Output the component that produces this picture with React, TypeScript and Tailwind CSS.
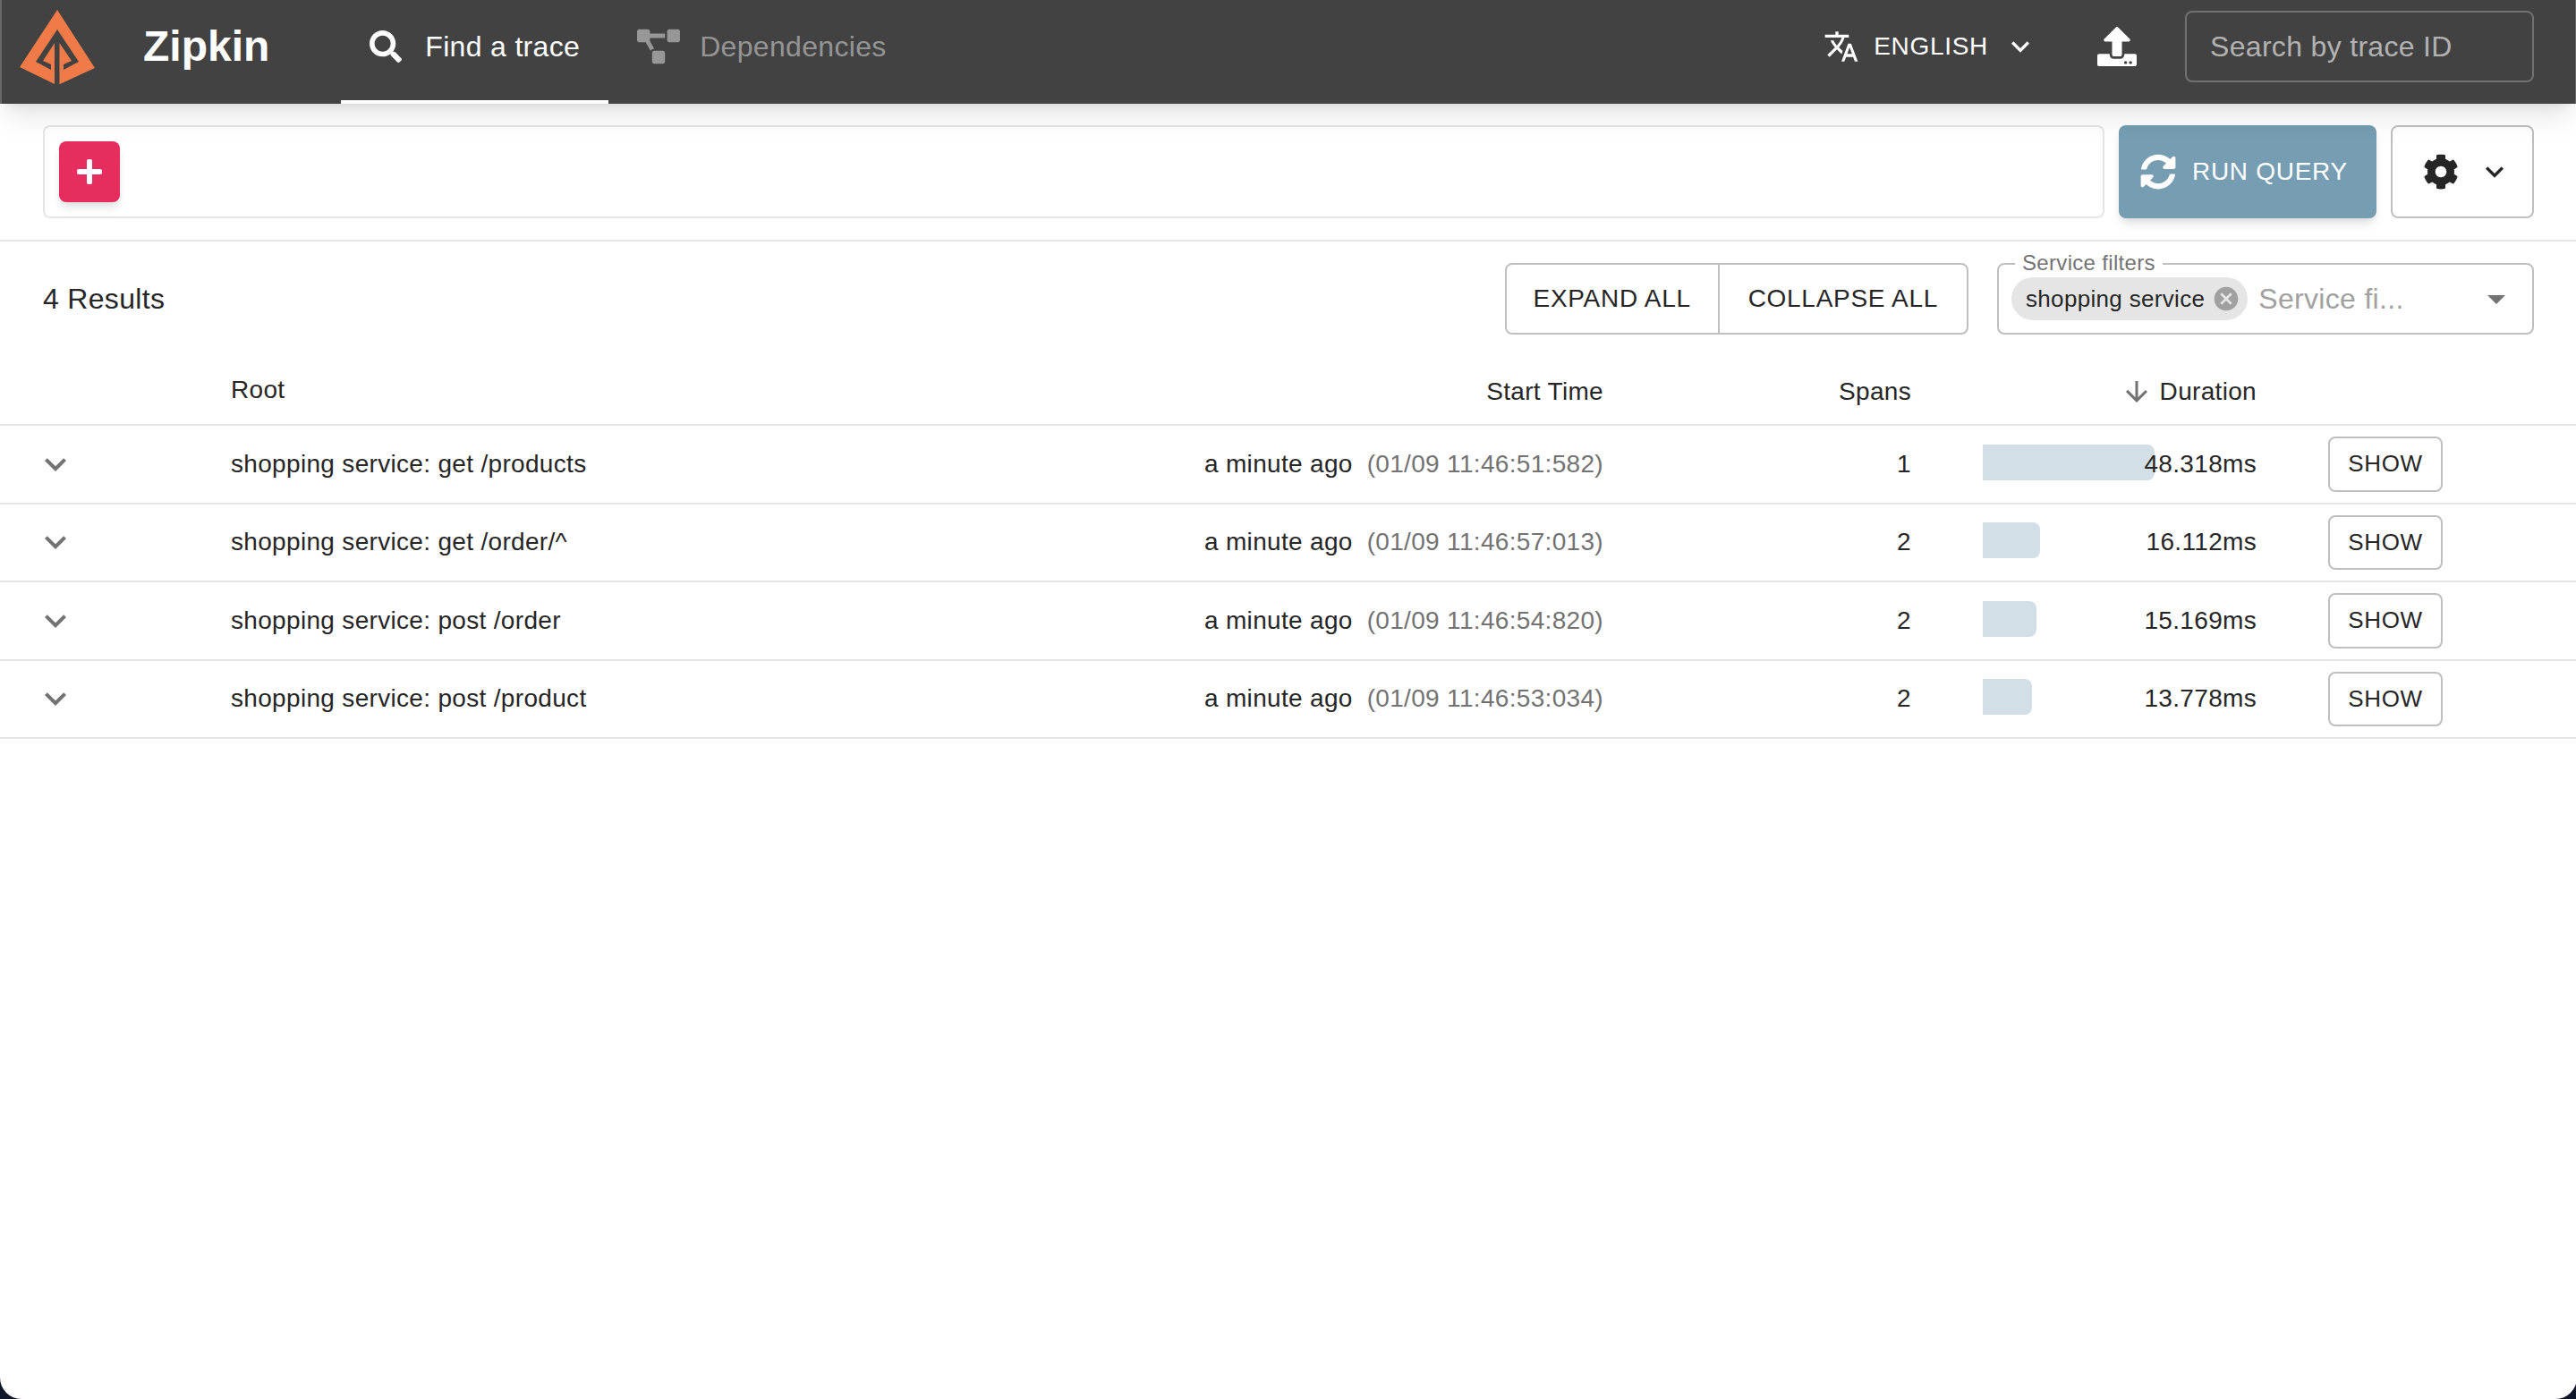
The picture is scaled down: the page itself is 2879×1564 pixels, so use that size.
import { FaCog, FaPlus, FaProjectDiagram, FaSearch, FaSyncAlt, FaUpload } from 'react-icons/fa';

const traces = [
  { root: 'shopping service: get /products', time: '(01/09 11:46:51:582)', spans: 1, duration: 48.318 },
  { root: 'shopping service: get /order/^', time: '(01/09 11:46:57:013)', spans: 2, duration: 16.112 },
  { root: 'shopping service: post /order', time: '(01/09 11:46:54:820)', spans: 2, duration: 15.169 },
  { root: 'shopping service: post /product', time: '(01/09 11:46:53:034)', spans: 2, duration: 13.778 },
];

const maxDuration = Math.max(...traces.map((t) => t.duration));

const ExpandMore = ({ className }: { className: string }) => (
  <svg viewBox="0 0 24 24" fill="currentColor" className={className}>
    <path d="M16.59 8.59 12 13.17 7.41 8.59 6 10l6 6 6-6z" />
  </svg>
);

const Logo = () => (
  <svg viewBox="0 0 96 92" className="h-11.5 w-12 shrink-0">
    <path d="M48 5 90 70 51 88H45L6 69z" fill="#f07b48" />
    <path
      d="M48 27 24 63 41 72V66L32 62 45 42V88H50.5V42L64 62 55 66V72L72 63z"
      fill="#424242"
    />
  </svg>
);

const TranslateIcon = () => (
  <svg viewBox="0 0 24 24" fill="currentColor" className="h-5 w-5">
    <path d="M12.87 15.07l-2.54-2.51.03-.03c1.74-1.94 2.98-4.17 3.71-6.53H17V4h-7V2H8v2H1v1.99h11.17C11.5 7.92 10.44 9.75 9 11.35 8.07 10.32 7.3 9.19 6.69 8h-2c.73 1.63 1.73 3.17 2.98 4.56l-5.09 5.02L4 19l5-5 3.11 3.11.76-2.04zM18.5 10h-2L12 22h2l1.12-3h4.75L21 22h2l-4.5-12zm-2.62 7l1.62-4.33L19.12 17h-3.24z" />
  </svg>
);

const Header = () => (
  <header className="relative z-10 flex h-14.5 shrink-0 items-center border-x border-white/20 bg-[#424242] pb-1.5 pl-1.75 pr-5.75 text-white shadow-lg">
    <Logo />
    <span className="ml-6 text-2xl font-bold tracking-normal">Zipkin</span>
    <nav className="-mb-1.5 ml-10 flex self-stretch">
      <div className="flex items-center border-b-2 border-white px-4 pb-1">
        <FaSearch className="mr-3.25 h-4.5 w-4.5" />
        <span>Find a trace</span>
      </div>
      <div className="flex items-center border-b-2 border-transparent px-4 pb-1 text-white/45">
        <FaProjectDiagram className="mr-2.75 h-5 w-6" />
        <span>Dependencies</span>
      </div>
    </nav>
    <div className="ml-auto flex items-center">
      <TranslateIcon />
      <span className="ml-2 text-sm uppercase tracking-wide">English</span>
      <ExpandMore className="ml-2 h-5 w-5" />
    </div>
    <FaUpload className="ml-8.25 h-5.5 w-5.5" />
    <input
      placeholder="Search by trace ID"
      className="ml-6.75 h-10 w-48.75 rounded border border-white/25 bg-transparent px-3.25 outline-none placeholder:text-white/60"
    />
  </header>
);

const SearchBar = () => (
  <div className="flex gap-2 border-b border-neutral-200 px-6 py-3">
    <div className="flex h-13 flex-1 items-center rounded border border-neutral-200 px-2">
      <button className="flex h-8.5 w-8.5 items-center justify-center rounded bg-[#e52e5e] text-white shadow-md">
        <FaPlus className="h-4 w-4" />
      </button>
    </div>
    <button className="flex h-13 w-36 items-center gap-2.25 rounded bg-[#769db2] pl-3 text-sm uppercase tracking-wide text-white shadow-md">
      <FaSyncAlt className="h-5 w-5" />
      Run Query
    </button>
    <button className="flex h-13 w-20 items-center justify-center gap-2.5 rounded border border-black/25 pl-1.5 text-neutral-800">
      <FaCog className="h-5 w-5" />
      <ExpandMore className="h-5 w-5" />
    </button>
  </div>
);

const ResultsBar = () => (
  <div className="flex items-center px-6 pt-3">
    <span className="flex-1">4 Results</span>
    <div className="flex h-10 rounded border border-black/25 text-sm">
      <button className="border-r border-black/25 px-3.75 uppercase tracking-wide">Expand All</button>
      <button className="px-4 uppercase tracking-wide">Collapse All</button>
    </div>
    <div className="relative ml-4 flex h-10 w-75 items-center rounded border border-black/25 pl-1.75 pr-2">
      <span className="absolute -top-2.25 left-2.25 bg-white px-1 text-xs text-neutral-500">Service filters</span>
      <span className="flex h-6 items-center rounded-full bg-neutral-200 pl-2 pr-1 text-[13px]">
        shopping service
        <svg viewBox="0 0 24 24" fill="currentColor" className="ml-1 h-4 w-4 text-black/30">
          <path d="M12 2C6.47 2 2 6.47 2 12s4.47 10 10 10 10-4.47 10-10S17.53 2 12 2zm5 13.59L15.59 17 12 13.41 8.41 17 7 15.59 10.59 12 7 8.41 8.41 7 12 10.59 15.59 7 17 8.41 13.41 12 17 15.59z" />
        </svg>
      </span>
      <span className="ml-1.5 text-neutral-400">Service fi...</span>
      <svg viewBox="0 0 24 24" fill="currentColor" className="ml-auto h-6 w-6 text-neutral-500">
        <path d="M7 10l5 5 5-5z" />
      </svg>
    </div>
  </div>
);

const TableHeader = () => (
  <div className="flex items-center border-b border-neutral-200 pb-1.5 pr-18.75 pt-5 text-sm leading-6">
    <span className="w-32 shrink-0" />
    <span className="flex-1 pb-0.5 pl-px leading-5.5">Root</span>
    <span>Start Time</span>
    <span className="w-43 text-right">Spans</span>
    <span className="ml-10 flex w-38.25 items-center justify-end">
      <svg viewBox="0 0 24 24" fill="currentColor" className="mr-1 h-4.5 w-4.5 text-neutral-500">
        <path d="M20 12l-1.41-1.41L13 16.17V4h-2v12.17l-5.58-5.59L4 12l8 8 8-8z" />
      </svg>
      Duration
    </span>
    <span className="ml-10 w-16" />
  </div>
);

const TraceRow = ({ root, time, spans, duration }: (typeof traces)[number]) => (
  <div className="flex items-center border-b border-neutral-200 py-1.5 pr-18.75 text-sm">
    <span className="w-32 shrink-0 pl-4.75">
      <ExpandMore className="h-6 w-6 text-neutral-500" />
    </span>
    <span className="flex-1 pl-px">{root}</span>
    <span>a minute ago</span>
    <span className="ml-2 text-neutral-500">{time}</span>
    <span className="w-43 text-right">{spans}</span>
    <span className="relative ml-10 w-38.25 text-right">
      <span className="absolute -top-px left-0 h-5 w-24">
        <span
          className="block h-full rounded-r bg-[#d3dfe7]"
          style={{ width: `${(duration / maxDuration) * 100}%` }}
        />
      </span>
      <span className="relative">{duration.toFixed(3)}ms</span>
    </span>
    <button className="ml-10 w-16 rounded border border-black/25 py-0.75 text-[13px] uppercase leading-[1.75] tracking-wide">
      Show
    </button>
  </div>
);

export default function App() {
  return (
    <div className="h-screen overflow-hidden bg-slate-900">
      <div className="flex h-full w-360 flex-col overflow-hidden rounded-b-xl bg-white font-['Liberation_Sans',sans-serif] tracking-[0.01em] text-neutral-800 [zoom:2]">
        <Header />
        <SearchBar />
        <ResultsBar />
        <TableHeader />
        {traces.map((trace) => (
          <TraceRow key={trace.root} {...trace} />
        ))}
      </div>
    </div>
  );
}
